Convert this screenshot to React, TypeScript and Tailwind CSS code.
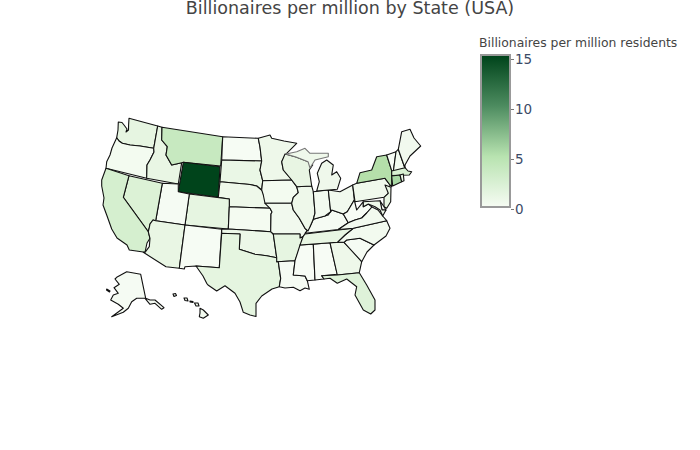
const states: [string, string, string][] = [
  ['WA', '#e6f5e1', '129,118.3 157.7,126 153.7,148.3 146,147 140,146 130,145 122.3,143.3 119,141 116.7,137.7 118,130 118.3,122 122,122.5 124,125 127,129 126,132 128.5,130 128.6,125'],
  ['OR', '#f3fbf0', '116.7,137.7 119,141 122.3,143.3 130,145 140,146 146,147 153.7,148.3 154,152 150,160 147,165 146.7,178.3 106,168.3 106.7,161.7 110,155 112,148'],
  ['ID', '#e9f6e4', '157.7,126 162,127.3 161.7,140 167.3,146.7 166,155 171.7,165 181.7,162.7 178.3,184 146.7,178.3 147,165 150,160 154,152 153.7,148.3'],
  ['MT', '#c7e9c0', '162,127.3 222.7,136.7 220.7,166 183.3,162.3 181.7,162.7 171.7,165 166,155 167.3,146.7 161.7,140'],
  ['WY', '#00441b', '183.3,162.3 220,166.7 218.3,197.3 178.3,191.7'],
  ['ND', '#f6fcf4', '222.7,136.7 258.3,138.3 260,147 261.7,161 221.7,160'],
  ['SD', '#eaf7e6', '221.7,160 261.7,161 260,170 262.7,180.7 261.7,190 256.7,186 250,184.5 220,181.7'],
  ['NE', '#eef8ea', '220,181.7 250,184.5 256.7,186 263.3,191.7 266,200 270,208.3 229.3,206.7 229.3,199 218.3,197.3'],
  ['CO', '#e6f5e1', '189.3,194 229.3,199 229.3,206.7 228.3,229 185,225'],
  ['UT', '#f5fbf3', '162.3,183.3 178.3,184 178.3,191.7 189.3,194 185,225 155.7,220.7'],
  ['NV', '#dcf2d6', '129,175.7 162.3,183.3 155.7,220.7 153,220 150,224 149.3,227.7 148.3,231.7 123.3,197.3'],
  ['CA', '#d5efcf', '106,168.3 129,175.7 123.3,197.3 148.3,231.7 150,238.3 147,243 145,252.3 129.3,250 127,245 117,238 111.7,229 106.7,215 103,205 104,198 101.7,186 101.7,180'],
  ['AZ', '#e9f6e4', '155.7,220.7 185,225 179.3,268.3 166,266.7 143.3,252.3 145,252.3 149.3,246.7 150,238.3 148.3,231.7 149.3,227.7 150,224 153,220'],
  ['NM', '#f6fcf4', '185,225 221.7,229.3 219.3,267.7 196,266 185,266.7 184.3,269 179.3,268.3'],
  ['KS', '#f4fbf1', '229.3,206.7 270,208.3 272,212 271,214 270.7,231.7 228.3,229'],
  ['OK', '#ecf7e8', '221.7,229.3 228.3,229 270.7,231.7 273.3,234 276.7,257.7 266.7,255.7 255,254.3 239.3,249.3 240,234 221.7,233.3'],
  ['TX', '#e5f5e0', '221.7,233.3 240,234 239.3,249.3 255,254.3 266.7,255.7 276.7,257.7 278.3,261.7 280.7,278.3 279.3,286.7 272,289 261.7,296 256,303.3 256,316.5 250,315 243.3,312.3 240,302 235,293.3 225,285.7 216.7,291 208,285 206.7,283.3 203,276 196,266 219.3,267.7'],
  ['MN', '#eef8ea', '258.3,138.3 270,135 271.7,138.3 284,141 296.7,143.3 286.7,153.3 281.7,161.7 283.3,170 290.7,178.3 291.7,180 262.7,180.7 260,170 261.7,161 260,147'],
  ['IA', '#f3fbf0', '262.7,180.7 291.7,180 296.7,186.7 298.3,192.7 293.3,197.3 291.7,203.3 265,203.3 263.3,195 261.7,190'],
  ['MO', '#f1f9ee', '265,203.3 291.7,203.3 293.3,210 299.3,218.3 305,228.3 308,231 305,234 303,236.7 300,238 300,234 273.3,234 270.7,231.7 271,214 272,212 270,208.3'],
  ['AR', '#e6f5e1', '273.3,234 300,234 300,238 303,236.7 301,245 295,260.7 276.7,261.7 276.7,257.7'],
  ['LA', '#f5fbf3', '276.7,261.7 295,260.7 293.3,275 305,276 307.3,280.7 309.3,289.3 305,288 300,290.7 293.3,287.3 285,288 279.3,286.7 280.7,278.3 278.3,261.7'],
  ['MS', '#f7fcf5', '300,245 313.3,244.3 315,280 307.3,280.7 305,276 293.3,275 295,260.7'],
  ['AL', '#f7fcf5', '313.3,244.3 330,242.7 337.3,274.3 321.7,275.7 324,279 315,280'],
  ['GA', '#eef8ea', '330,242.7 344,242.3 352,250 361.7,261.7 359.3,272.7 337.3,275'],
  ['FL', '#def2d9', '321.7,275.7 337.3,275 359.3,272.7 366.7,285 375,300 375,310 370.7,314 363.3,310 355,295 356.7,286.7 346.7,279 337.3,283.3 330,278.3 324,279'],
  ['SC', '#f5fbf3', '344,242.3 346.7,240 360,238.3 374,245 367,252 361.7,261.7'],
  ['NC', '#f2faef', '337.3,242.3 345,235 353.3,228.3 386.7,220.7 390,228.3 386,236 374,245 360,238.3 346.7,240 344,242.3'],
  ['TN', '#e8f6e3', '305,234 353.3,228.3 345,235 337.3,242.3 300,245 303,236.7'],
  ['KY', '#f5fbf3', '305,233.3 310,226.7 313.3,219.3 328.3,215 331.7,210 343.3,214 348.3,222.7 338.3,229.5'],
  ['IL', '#eef8ea', '296.7,186.7 311.7,186 313.3,191.7 315,213 313.3,219.3 310,226.7 308,231 305,228.3 299.3,218.3 293.3,210 291.7,203.3 293.3,197.3 298.3,192.7'],
  ['IN', '#f2faef', '313.3,191.7 328.3,190 330.7,211.7 325,216 313.3,219.3 315,213'],
  ['OH', '#f1f9ee', '328.3,190 340,191.7 352.7,185 354.3,200 347.3,211.7 343.3,214 331.7,210 330.7,211.7'],
  ['WI', '#e8f5e3', '285,154 296,157 308.3,161.7 312.7,165 309.3,170 311.7,186 296.7,186.7 291.7,180 283.3,170 281.7,161.7'],
  ['UP', '#eff8eb', '286,154 296.7,151.7 305,148.3 310,153.3 328.3,153.3 328.3,156.7 315,160 310,168 308,161.7 296,157'],
  ['MI', '#eff8eb', '316.7,191 337.3,189.3 340.7,178.3 336.7,171.7 331.7,175 333.3,165 326.7,160 321.7,163.3 317.3,173.3 319.3,181.7'],
  ['WV', '#f7fcf5', '354.3,200 356.7,210 363.3,201.7 363.3,206.7 368.3,204 372,207 366.7,213 361.7,218 355,220 348.3,222.7 343.3,214 347.3,211.7'],
  ['VA', '#f2faef', '338.3,229.5 348.3,222.7 355,220 361.7,218 366.7,213 372,207 378,210 382.7,216 386.7,220.7 353.3,228.3'],
  ['PA', '#f0f9ec', '352.7,185 356.7,183.3 385,178.3 390,185 388.3,193.3 384,197.3 355,201.7'],
  ['NY', '#b5dfaa', '356.7,183.3 360,172.7 371.7,170 376.7,156.7 386.7,155 391.7,170.7 391.7,181.7 391.7,186.7 390,185 385,178.3'],
  ['NJ', '#e8f6e3', '385,185 391,187.3 390.7,201.7 386.7,208.3 384,206.7 384,197.3 388.3,193.3'],
  ['DE', '#f7fcf5', '380,200.7 384,206.7 386,210 382,210'],
  ['MD', '#eef8ea', '363.3,201.7 380,200.7 382,210 386,210 382.7,216 380,210 375,206.7 368.3,204 363.3,206.7'],
  ['VT', '#f7fcf5', '386.7,155 396,151.7 393.3,171.7 391.7,170.7'],
  ['NH', '#f3fbf0', '396,151.7 398.3,149.3 405,168.3 404,170 393.3,171.7'],
  ['ME', '#f1f9ee', '398.3,149.3 401.7,131.7 410,129.3 414,138 420.7,146 410,156 405,165 405,168.3'],
  ['MA', '#d8f0d2', '391.7,171 405,167.7 408,171 411.7,171.7 409.3,175 391.7,175.5'],
  ['CT', '#a9d9a5', '391.7,176 400,175 401.7,181.7 392.7,186'],
  ['RI', '#e8f6e3', '400,175 403.3,174 404,180.7 401.7,181.7'],
  ['AK', '#f5fbf3', '116.7,277.3 126.7,271.7 140.7,274.3 145.7,298.3 150,300 155,300 164,307.7 161.7,309.3 155,303.3 150,304.3 145,298.3 136.7,298.3 131.7,301.7 128.3,308.3 123.3,312.3 111.7,316.7 123.3,308.3 118.3,304.3 110.7,300 113.3,295 118.3,293.3 114,287.7 119.3,284.3 115,279'],
  ['AK2', '#f5fbf3', '106.7,289 110,291 109.5,292 106.5,290'],
  ['HI1', '#f2faef', '173,294 175.5,293.5 176.5,295.5 174,296.5'],
  ['HI2', '#f2faef', '184,298 187,298 188,301 185,300.5'],
  ['HI3', '#f2faef', '190,301 193,301.5 193,302.5 190,302'],
  ['HI4', '#f2faef', '194.5,303 198,303 199,306 196,306'],
  ['HI5', '#f2faef', '200,308.3 203.3,310 208.3,315 203.3,318.3 199.3,316.7 200,313'],
]

export default function App() {
  return (
    <div className="w-[700px] h-[450px] bg-white overflow-hidden font-['DejaVu_Sans',sans-serif] text-[#444]">
      <h1 className="h-[17px] text-center text-[17.5px] leading-[17px] whitespace-nowrap">
        Billionaires per million by State (USA)
      </h1>
      <div className="flex items-start">
        {/* Map */}
        <svg width="330" height="210" viewBox="98 115 330 210" className="mt-[98px] ml-[98px] shrink-0">
          {states.map(([name, fill, points]) => (
            <polygon
              key={name}
              points={points}
              fill={fill}
              stroke={name === 'UP' ? '#777' : '#111'}
              strokeWidth="1.1"
              strokeLinejoin="round"
            />
          ))}
        </svg>

        {/* Colorbar */}
        <div className="ml-[51px] mt-[18px]">
          <div className="text-[12.4px] leading-[16px] whitespace-nowrap">Billionaires per million residents</div>
          <div className="flex mt-[3px] ml-[1px]">
            <div className="w-[31px] h-[154px] border-2 border-[#999] bg-[linear-gradient(to_top,#f5fbf2,#b8e3b0_33%,#4c8b5f_67%,#00441b)]"></div>
            <div className="h-[166px] -mt-[3px] flex flex-col justify-between text-[13.5px] leading-[16px] text-[#3c4a66]">
              {['15', '10', '5', '0'].map((tick) => (
                <div key={tick} className="flex items-center gap-[1px]">
                  <span className="w-[3px] h-[1px] bg-[#777]"></span>
                  <span>{tick}</span>
                </div>
              ))}
            </div>
          </div>
        </div>
      </div>
    </div>
  )
}
